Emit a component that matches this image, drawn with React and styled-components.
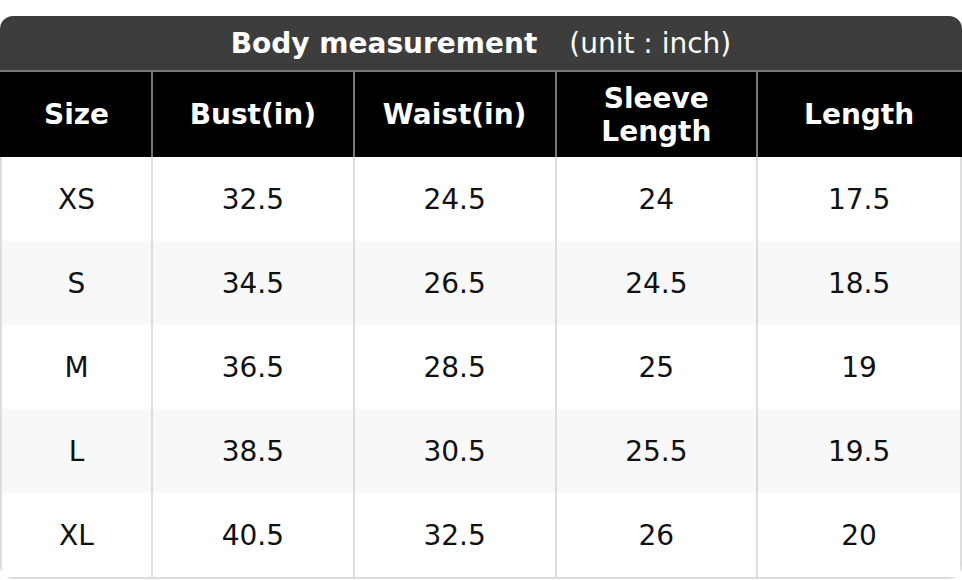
import styled, { createGlobalStyle } from "styled-components";

const GlobalStyle = createGlobalStyle`
  html, body {
    margin: 0;
    padding: 0;
    background: #ffffff;
    font-family: "DejaVu Sans", "Noto Sans", sans-serif;
  }
`;

const Page = styled.div`
  width: 962px;
  padding-top: 16px;
`;

const Chart = styled.div`
  border-radius: 13px;
  overflow: hidden;
`;

const Title = styled.div`
  height: 56px;
  background: #3d3d3d;
  color: #ffffff;
  display: flex;
  align-items: center;
  justify-content: center;
  font-size: 28px;
  border-bottom: 2px solid #777777;
  box-sizing: border-box;

  strong {
    font-weight: 700;
  }

  span {
    margin-left: 32px;
    font-weight: 400;
  }
`;

const Body = styled.div`
  border: 2px solid #dddddd;
  border-top: none;
  border-radius: 0 0 13px 13px;
`;

const Row = styled.div`
  display: grid;
  grid-template-columns: 151px repeat(4, 1fr);
  height: ${(p) => (p.$head ? 85 : 84)}px;
  background: ${(p) => (p.$head ? "#000000" : p.$alt ? "#f8f8f8" : "#ffffff")};
  color: ${(p) => (p.$head ? "#ffffff" : "#111111")};
  border-left: ${(p) => (p.$head ? "2px solid #000000" : "none")};
  border-right: ${(p) => (p.$head ? "2px solid #000000" : "none")};
`;

const Cell = styled.div`
  display: flex;
  align-items: center;
  justify-content: center;
  text-align: center;
  font-size: 28px;
  line-height: 33px;
  font-weight: ${(p) => (p.$head ? 700 : 400)};
  border-right: 2px solid ${(p) => (p.$head ? "#777777" : "#dddddd")};

  &:last-child {
    border-right: none;
  }
`;

const headers = ["Size", "Bust(in)", "Waist(in)", ["Sleeve", "Length"], "Length"];

const rows = [
  ["XS", "32.5", "24.5", "24", "17.5"],
  ["S", "34.5", "26.5", "24.5", "18.5"],
  ["M", "36.5", "28.5", "25", "19"],
  ["L", "38.5", "30.5", "25.5", "19.5"],
  ["XL", "40.5", "32.5", "26", "20"],
];

const App = () => {
  return (
    <Page>
      <GlobalStyle />
      <Chart>
        <Title>
          <strong>Body measurement</strong>
          <span>(unit : inch)</span>
        </Title>
        <Row $head>
          {headers.map((h, i) => (
            <Cell $head key={i}>
              {Array.isArray(h) ? (
                <div>
                  {h[0]}
                  <br />
                  {h[1]}
                </div>
              ) : (
                h
              )}
            </Cell>
          ))}
        </Row>
        <Body>
          {rows.map((r, i) => (
            <Row key={r[0]} $alt={i % 2 === 1}>
              {r.map((v, j) => (
                <Cell key={j}>{v}</Cell>
              ))}
            </Row>
          ))}
        </Body>
      </Chart>
    </Page>
  );
};

export default App;
